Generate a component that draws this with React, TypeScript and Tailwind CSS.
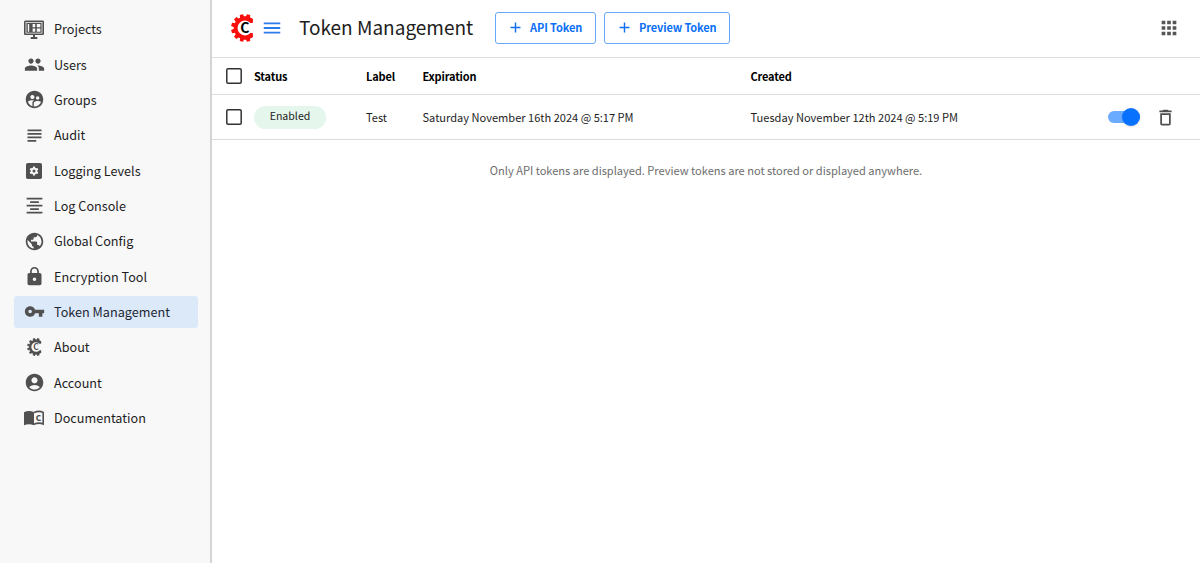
import type { ReactNode } from 'react';
import {
  MdAccountCircle,
  MdAdd,
  MdApps,
  MdDeleteOutline,
  MdFormatAlignCenter,
  MdLock,
  MdMenu,
  MdPeople,
  MdPublic,
  MdSubject,
  MdSupervisedUserCircle,
  MdVpnKey,
} from 'react-icons/md';

const TOOTH_ANGLES = [75, 105, 135, 165, 195, 225, 255, 285];

function Gear({ width, height, className, letter }: { width: number; height: number; className: string; letter: string }) {
  return (
    <svg width={width} height={height} viewBox="-14 -14 23 28" className={className}>
      <path d="M8 -9A11.7 11.7 0 1 0 8 9L7.8 5H5.4A7.4 7.4 0 1 1 5.4 -5H7.8Z" fill="currentColor" />
      {TOOTH_ANGLES.map((a) => (
        <path key={a} d="M10.5 -2.2L13.9 -1.7V1.7L10.5 2.2Z" fill="currentColor" transform={`rotate(${a})`} />
      ))}
      <text x="-0.2" y="5.1" textAnchor="middle" className={letter}>
        C
      </text>
    </svg>
  );
}

function ProjectsIcon() {
  return (
    <svg width="20" height="19" viewBox="0 0 20 19" fill="none" stroke="currentColor">
      <rect x="0.8" y="1.3" width="18.4" height="13" rx="0.6" strokeWidth="1.6" />
      <path
        d="M2.4 2.8H17.6V12.8H2.4ZM3.8 4V11.7H5.2V4ZM8.6 4V7.3H11.2V4ZM12.8 4V7.3H16.4V4ZM8.6 8.6V11.7H11.2V8.6ZM12.8 8.6V11.7H16.4V8.6Z"
        fill="currentColor"
        fillRule="evenodd"
        stroke="none"
      />
      <path d="M10 14v3M6.7 17.9h6.6" strokeWidth="2" />
    </svg>
  );
}

function LevelsIcon() {
  return (
    <svg width="16" height="16" viewBox="0 0 16 16">
      <rect width="16" height="16" rx="1.8" fill="currentColor" />
      <g className="fill-[#f8f8f8]">
        {[0, 60, 120].map((a) => (
          <rect key={a} x="6.9" y="3.6" width="2.2" height="8.8" rx="0.5" transform={`rotate(${a} 8 8)`} />
        ))}
        <circle cx="8" cy="8" r="3.3" />
      </g>
      <circle cx="8" cy="8" r="1.5" fill="currentColor" />
    </svg>
  );
}

function DocsIcon() {
  return (
    <svg width="20" height="16" viewBox="0 0 20 16">
      <path d="M0 2.2C3 .6 7 .6 10 2.2V15.2C7 13.8 3 13.8 0 15.2Z" fill="currentColor" />
      <path d="M10 2.4C13 1.2 16.5 1 19.2 2.4V14C16.5 12.8 13 13 10 14.3" fill="none" stroke="currentColor" strokeWidth="1.6" />
      <text x="14.3" y="10.6" textAnchor="middle" className="fill-current text-[8px] font-black">
        C
      </text>
    </svg>
  );
}

function Checkbox() {
  return (
    <svg width="18" height="18" viewBox="0 0 18 18" className="text-[#333]">
      <rect x="1.8" y="1.8" width="14.4" height="14.4" rx="1.2" fill="none" stroke="currentColor" strokeWidth="1.5" />
    </svg>
  );
}

const items: { label: string; icon: ReactNode }[] = [
  { label: 'Projects', icon: <ProjectsIcon /> },
  { label: 'Users', icon: <MdPeople size={21} /> },
  { label: 'Groups', icon: <MdSupervisedUserCircle size={21} /> },
  { label: 'Audit', icon: <MdSubject size={21} /> },
  { label: 'Logging Levels', icon: <LevelsIcon /> },
  { label: 'Log Console', icon: <MdFormatAlignCenter size={21} /> },
  { label: 'Global Config', icon: <MdPublic size={21} /> },
  { label: 'Encryption Tool', icon: <MdLock size={21} /> },
  { label: 'Token Management', icon: <MdVpnKey size={21} /> },
  {
    label: 'About',
    icon: <Gear width={15} height={18} className="text-[#505050]" letter="fill-current text-[13px] font-bold" />,
  },
  { label: 'Account', icon: <MdAccountCircle size={21} /> },
  { label: 'Documentation', icon: <DocsIcon /> },
];

function TokenButton({ label, className }: { label: string; className: string }) {
  return (
    <button
      className={`flex h-8 items-center rounded-[3px] border border-[#67a7fa] pl-[10.5px] text-[11px] leading-none font-bold tracking-[-0.01em] whitespace-nowrap text-[#0b6ff5] ${className}`}
    >
      <MdAdd size={17} className="mr-[6.5px] shrink-0" />
      <span>{label}</span>
    </button>
  );
}

const columns = 'grid grid-cols-[29px_112px_56.5px_328px_1fr_auto] items-center leading-none';

export default function App() {
  return (
    <div className="flex h-[563px] w-[1200px] overflow-hidden bg-white font-['Noto_Sans_CJK_SC',sans-serif] text-[#1d1d1d]">
      <nav className="flex w-[212px] shrink-0 flex-col gap-[3.82px] border-r-2 border-[#d4d4d4] bg-[#f8f8f8] pt-[13.5px] pr-3 pl-3.5">
        {items.map(({ label, icon }) => (
          <a
            key={label}
            className={`flex h-[31.5px] shrink-0 items-center rounded-[3px] pl-[9px] text-[12.65px] leading-none ${
              label === 'Token Management' ? 'bg-[#dce9f9] text-[#1d2733]' : ''
            }`}
          >
            <span className="mr-[9px] flex w-[22px] justify-center text-[#505050]">{icon}</span>
            <span className="pt-px">{label}</span>
          </a>
        ))}
      </nav>
      <main className="min-w-0 flex-1">
        <header className="flex h-[58px] items-center border-b border-[#dcdcdc] pr-5 pb-[1.5px] pl-[19px]">
          <Gear width={23} height={28} className="text-[#fb0f0c]" letter="fill-black text-[14px] font-bold" />
          <MdMenu size={22} className="ml-[7px] text-[#2c7de8]" />
          <h1 className="-mt-[2px] ml-4 w-[196px] text-[19px] leading-none whitespace-nowrap">Token Management</h1>
          <TokenButton label="API Token" className="w-[101px]" />
          <TokenButton label="Preview Token" className="ml-2 w-[126px]" />
          <MdApps size={22} className="ml-auto text-[#555]" />
        </header>
        <div className={`${columns} h-[37px] border-b border-[#dcdcdc] pl-[13px] text-[11px] font-bold tracking-[-0.015em] text-black`}>
          <Checkbox />
          <span>Status</span>
          <span>Label</span>
          <span>Expiration</span>
          <span>Created</span>
        </div>
        <div className={`${columns} h-[45px] border-b border-[#dcdcdc] pr-6 pl-[13px] text-[11.07px]`}>
          <Checkbox />
          <span className="flex h-[23px] w-[72px] items-center justify-center rounded-full bg-[#e5f6ec] pb-px text-[10.6px]">
            Enabled
          </span>
          <span className="pt-px">Test</span>
          <span className="pt-px">Saturday November 16th 2024 @ 5:17 PM</span>
          <span className="pt-px">Tuesday November 12th 2024 @ 5:19 PM</span>
          <span className="flex items-center">
            <span className="mr-[15px] flex h-3 w-8 items-center justify-end rounded-full bg-[#6aabff]">
              <span className="size-[18px] rounded-full bg-[#0872ff] shadow-sm" />
            </span>
            <MdDeleteOutline size={21} className="text-[#505050]" />
          </span>
        </div>
        <p className="mt-[25px] text-center text-[11.07px] leading-none text-[#6d6d6d]">
          Only API tokens are displayed. Preview tokens are not stored or displayed anywhere.
        </p>
      </main>
    </div>
  );
}
